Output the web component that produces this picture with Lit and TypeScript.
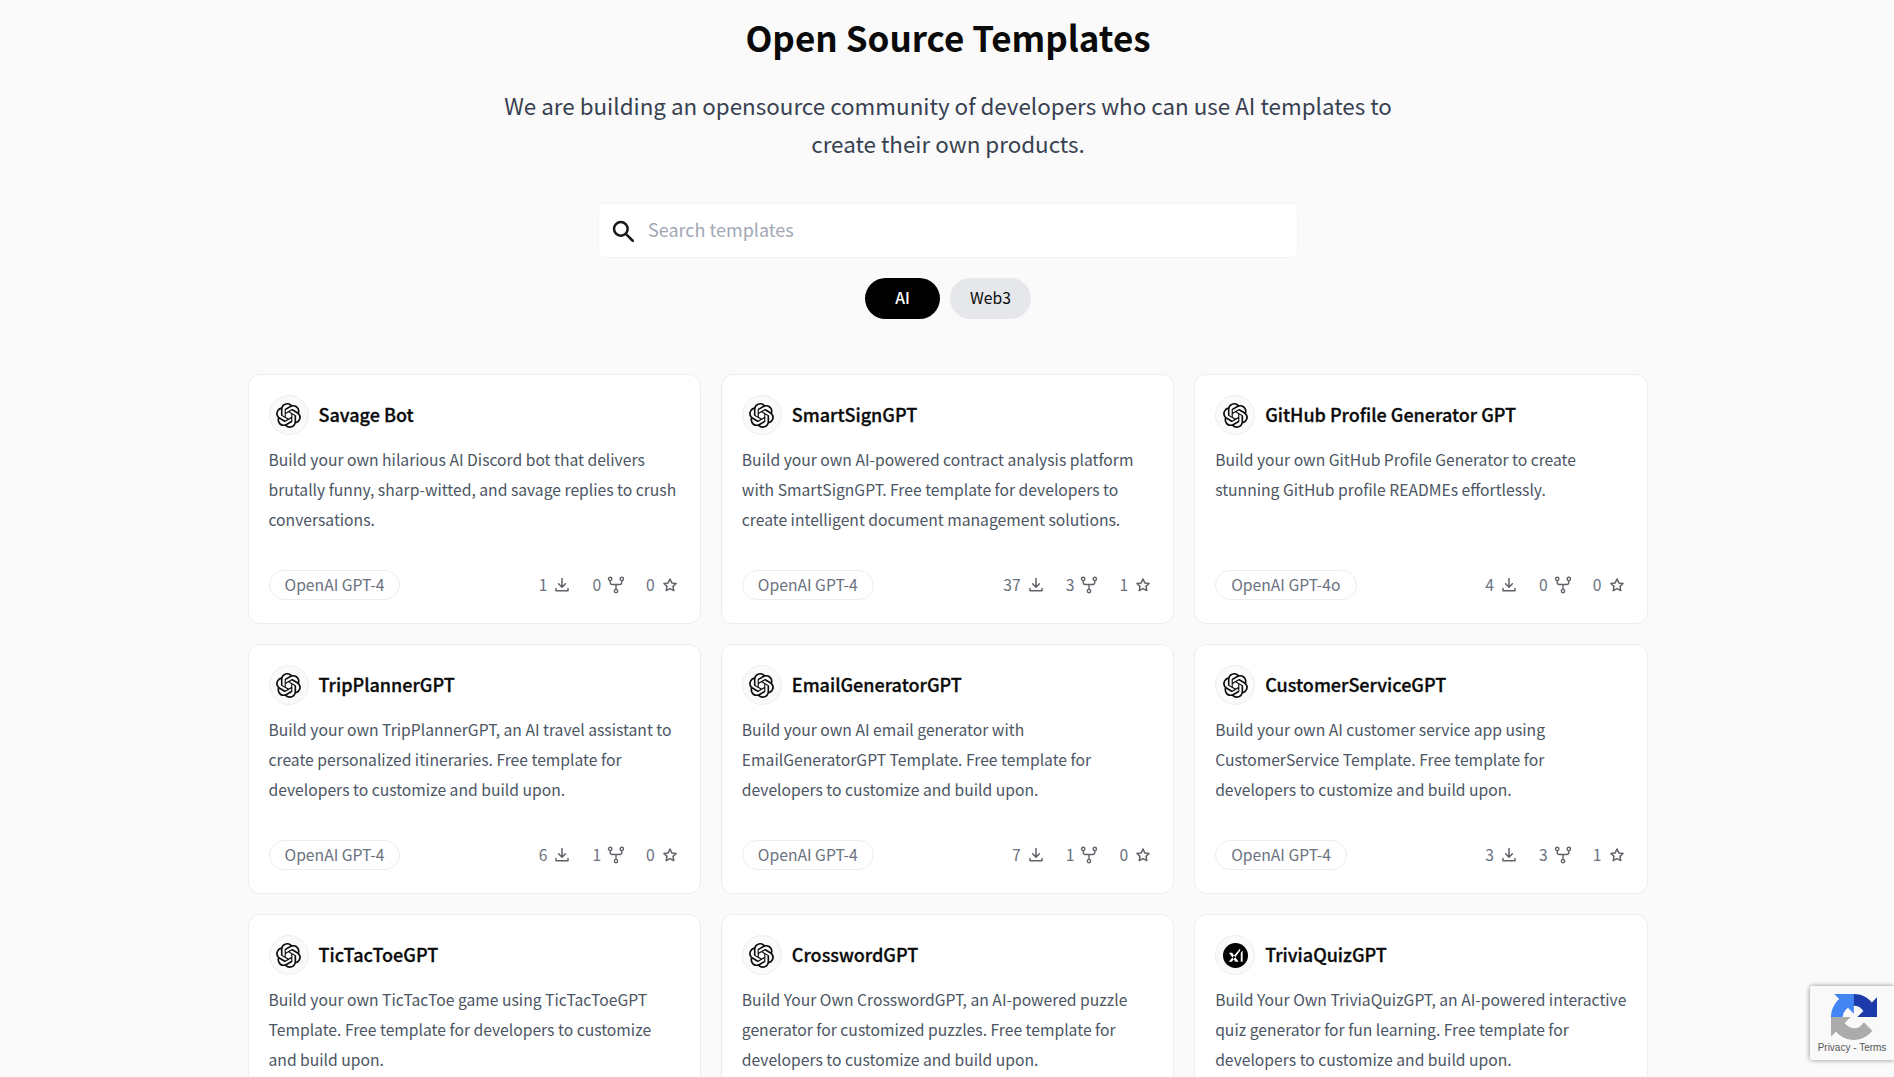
import { LitElement, html, css, svg } from "lit";
import { customElement } from "lit/decorators.js";

const OPENAI = "M22.2819 9.8211a5.9847 5.9847 0 0 0-.5157-4.9108 6.0462 6.0462 0 0 0-6.5098-2.9A6.0651 6.0651 0 0 0 4.9807 4.1818a5.9847 5.9847 0 0 0-3.9977 2.9 6.0462 6.0462 0 0 0 .7427 7.0966 5.98 5.98 0 0 0 .511 4.9107 6.051 6.051 0 0 0 6.5146 2.9001A5.9847 5.9847 0 0 0 13.2599 24a6.0557 6.0557 0 0 0 5.7718-4.2058 5.9894 5.9894 0 0 0 3.9977-2.9001 6.0557 6.0557 0 0 0-.7475-7.0729zm-9.022 12.6081a4.4755 4.4755 0 0 1-2.8764-1.0408l.1419-.0804 4.7783-2.7582a.7948.7948 0 0 0 .3927-.6813v-6.7369l2.02 1.1686a.071.071 0 0 1 .038.052v5.5826a4.504 4.504 0 0 1-4.4945 4.4944zm-9.6607-4.1254a4.4708 4.4708 0 0 1-.5346-3.0137l.142.0852 4.783 2.7582a.7712.7712 0 0 0 .7806 0l5.8428-3.3685v2.3324a.0804.0804 0 0 1-.0332.0615L9.74 19.9502a4.4992 4.4992 0 0 1-6.1408-1.6464zM2.3408 7.8956a4.485 4.485 0 0 1 2.3655-1.9728V11.6a.7664.7664 0 0 0 .3879.6765l5.8144 3.3543-2.0201 1.1685a.0757.0757 0 0 1-.071 0l-4.8303-2.7865A4.504 4.504 0 0 1 2.3408 7.872zm16.5963 3.8558L13.1038 8.364 15.1192 7.2a.0757.0757 0 0 1 .071 0l4.8303 2.7913a4.4944 4.4944 0 0 1-.6765 8.1042v-5.6772a.79.79 0 0 0-.407-.667zm2.0107-3.0231l-.142-.0852-4.7735-2.7818a.7759.7759 0 0 0-.7854 0L9.409 9.2297V6.8974a.0662.0662 0 0 1 .0284-.0615l4.8303-2.7866a4.4992 4.4992 0 0 1 6.6802 4.66zM8.3065 12.863l-2.02-1.1638a.0804.0804 0 0 1-.038-.0567V6.0742a4.4992 4.4992 0 0 1 7.3757-3.4537l-.142.0805L8.704 5.459a.7948.7948 0 0 0-.3927.6813zm1.0976-2.3654l2.602-1.4998 2.6069 1.4998v2.9994l-2.5974 1.4997-2.6067-1.4997Z";

const logo = (kind: string) =>
  kind === "x"
    ? html`<svg class="xlogo" viewBox="0 0 26 26"><circle cx="13" cy="13" r="13" fill="#000"/><path d="M6 19.500h3.200L17.800 8V5.800zM6.200 10.200h3.300l6.700 9.300h-3.300zM18.500 10.200l1.900-2.500v11.800h-1.900z" fill="#fff"/></svg>`
    : html`<svg class="ologo" viewBox="0 0 24 24"><path d=${OPENAI} fill="#0d0d0d"/></svg>`;

const iDownload = svg`<path d="M9 2.500v8.500M5.600 7.800 9 11.200l3.400-3.400M3 12.500v2.200h12v-2.200" fill="none" stroke="currentColor" stroke-width="1.500" stroke-linecap="round" stroke-linejoin="round"/>`;
const iFork = svg`<g fill="none" stroke="currentColor" stroke-width="1.400"><circle cx="3.200" cy="2.900" r="1.700"/><circle cx="14.800" cy="2.900" r="1.700"/><circle cx="9" cy="15.100" r="1.700"/><path d="M3.200 4.600v1.700c0 1.200.9 2.200 2.200 2.200h7.200c1.300 0 2.200-1 2.200-2.200V4.600M9 8.500v4.900"/></g>`;
const iStar = svg`<path d="M9 3l1.850 3.900 4.250.55-3.120 2.950.82 4.200L9 12.550 5.200 14.600l.82-4.200L2.900 7.450l4.250-.55z" fill="none" stroke="currentColor" stroke-width="1.500" stroke-linejoin="round"/>`;

interface T { name: string; desc: string; tag?: string; d?: number; f?: number; s?: number; logo?: string }
const items: T[] = [
  { name: "Savage Bot", desc: "Build your own hilarious AI Discord bot that delivers brutally funny, sharp-witted, and savage replies to crush conversations.", tag: "OpenAI GPT-4", d: 1, f: 0, s: 0 },
  { name: "SmartSignGPT", desc: "Build your own AI-powered contract analysis platform with SmartSignGPT. Free template for developers to create intelligent document management solutions.", tag: "OpenAI GPT-4", d: 37, f: 3, s: 1 },
  { name: "GitHub Profile Generator GPT", desc: "Build your own GitHub Profile Generator to create stunning GitHub profile READMEs effortlessly.", tag: "OpenAI GPT-4o", d: 4, f: 0, s: 0 },
  { name: "TripPlannerGPT", desc: "Build your own TripPlannerGPT, an AI travel assistant to create personalized itineraries. Free template for developers to customize and build upon.", tag: "OpenAI GPT-4", d: 6, f: 1, s: 0 },
  { name: "EmailGeneratorGPT", desc: "Build your own AI email generator with EmailGeneratorGPT Template. Free template for developers to customize and build upon.", tag: "OpenAI GPT-4", d: 7, f: 1, s: 0 },
  { name: "CustomerServiceGPT", desc: "Build your own AI customer service app using CustomerService Template. Free template for developers to customize and build upon.", tag: "OpenAI GPT-4", d: 3, f: 3, s: 1 },
  { name: "TicTacToeGPT", desc: "Build your own TicTacToe game using TicTacToeGPT Template. Free template for developers to customize and build upon." },
  { name: "CrosswordGPT", desc: "Build Your Own CrosswordGPT, an AI-powered puzzle generator for customized puzzles. Free template for developers to customize and build upon." },
  { name: "TriviaQuizGPT", desc: "Build Your Own TriviaQuizGPT, an AI-powered interactive quiz generator for fun learning. Free template for developers to customize and build upon.", logo: "x" },
];

@customElement("app-root")
export class AppRoot extends LitElement {
  static styles = css`
    :host {
      display: block;
      height: 1077px;
      overflow: hidden;
      position: relative;
      background: #fafafa;
      font-family: "Noto Sans CJK SC", "Source Sans Pro", sans-serif;
      color: #374151;
    }
    .page { display: flex; flex-direction: column; align-items: center; padding-left: 2px; }
    h1 {
      margin: 15px 0 0;
      font-size: 35px;
      line-height: 44px;
      font-weight: 700;
      color: #0a0a0a;
    }
    .sub {
      margin: 27px 0 0;
      width: 900px;
      text-align: center;
      font-size: 22.4px;
      line-height: 38px;
      color: #374151;
    }
    .search {
      margin-top: 41px;
      width: 700px;
      height: 55px;
      box-sizing: border-box;
      background: #fff;
      border: 1px solid #f3f4f6;
      border-radius: 6px;
      display: flex;
      align-items: center;
      gap: 12px;
      padding-left: 11px;
    }
    .search svg { width: 26px; height: 26px; flex: none; }
    .search input {
      flex: 1;
      border: 0;
      outline: 0;
      background: transparent;
      font: inherit;
      font-size: 18px;
      line-height: 24px;
      color: #111;
      padding: 0 0 4px;
    }
    .search input::placeholder { color: #a3a8b4; opacity: 1; }
    .tabs { margin-top: 20px; display: flex; gap: 10px; }
    .tab {
      height: 41px;
      min-width: 75px;
      box-sizing: border-box;
      border-radius: 21px;
      display: flex;
      align-items: center;
      justify-content: center;
      padding: 0 20px 2px;
      font-size: 15.7px;
      background: #e5e7eb;
      color: #0a0a0a;
    }
    .tab.on { background: #000; color: #fff; font-weight: 500; }
    .grid {
      margin: 55px 1px 0 0;
      width: 1400px;
      display: grid;
      grid-template-columns: repeat(3, 1fr);
      gap: 20px;
    }
    .card {
      box-sizing: border-box;
      height: 250px;
      background: #fff;
      border: 1px solid #eceded;
      border-radius: 12px;
      padding: 20px 19px 23px 20px;
      display: flex;
      flex-direction: column;
    }
    .head { display: flex; align-items: center; gap: 10px; }
    .icon {
      width: 40px;
      height: 40px;
      box-sizing: border-box;
      border-radius: 50%;
      border: 1px solid #eeeeee;
      background: #fafafa;
      display: flex;
      align-items: center;
      justify-content: center;
      flex: none;
    }
    .ologo { width: 25px; height: 25px; }
    .xlogo { width: 25px; height: 25px; }
    .name {
      font-size: 18px;
      line-height: 38px;
      padding-bottom: 2px;
      font-weight: 500;
      -webkit-text-stroke: 0.3px #0a0a0a;
      color: #0a0a0a;
    }
    .desc {
      margin: 10px 0 0;
      font-size: 15.68px;
      line-height: 30px;
      color: #4b5563;
      height: 90px;
    }
    .foot { margin-top: auto; display: flex; align-items: center; justify-content: space-between; }
    .tag {
      height: 30px;
      box-sizing: border-box;
      border: 1px solid #eceded;
      border-radius: 15px;
      padding: 0 15px;
      display: flex;
      align-items: center;
      font-size: 15.7px;
      line-height: 20px;
      color: #6b7280;
    }
    .stats { display: flex; gap: 21px; align-items: center; font-size: 15.7px; line-height: 20px; color: #6b7280; margin-right: 2px; }
    .stat { display: flex; align-items: center; gap: 6px; }
    .stat svg { width: 18px; height: 18px; color: #5f6368; }
    .recaptcha {
      position: absolute;
      right: 0;
      top: 986px;
      width: 84px;
      height: 74px;
      background: #f9f9f9;
      border-radius: 2px 0 0 2px;
      box-shadow: 0 0 5px #8a8a8a;
      display: flex;
      flex-direction: column;
      align-items: center;
      font-family: "Liberation Sans", Arial, sans-serif;
      overflow: hidden;
    }
    .recaptcha svg { width: 46px; height: 46px; margin-top: 8px; margin-left: 4px; flex: none; }
    .recaptcha span { font-size: 10px; line-height: 12px; color: #555; white-space: nowrap; margin-top: 2px; }
  `;

  private card(t: T) {
    return html`<div class="card">
      <div class="head"><div class="icon">${logo(t.logo ?? "o")}</div><div class="name">${t.name}</div></div>
      <p class="desc">${t.desc}</p>
      ${t.tag
        ? html`<div class="foot">
            <div class="tag">${t.tag}</div>
            <div class="stats">
              <div class="stat">${t.d}<svg viewBox="0 0 18 18">${iDownload}</svg></div>
              <div class="stat">${t.f}<svg viewBox="0 0 18 18">${iFork}</svg></div>
              <div class="stat">${t.s}<svg viewBox="0 0 18 18">${iStar}</svg></div>
            </div>
          </div>`
        : ""}
    </div>`;
  }

  render() {
    return html`<div class="page">
        <h1>Open Source Templates</h1>
        <p class="sub">We are building an opensource community of developers who can use AI templates to<br />create their own products.</p>
        <div class="search">
          <svg viewBox="0 0 24 24"><circle cx="10" cy="10" r="6.300" fill="none" stroke="#171717" stroke-width="2.300"/><path d="M14.800 14.800 21 21" stroke="#171717" stroke-width="2.300" stroke-linecap="round"/></svg>
          <input placeholder="Search templates" />
        </div>
        <div class="tabs"><div class="tab on">AI</div><div class="tab">Web3</div></div>
        <div class="grid">${items.map((t) => this.card(t))}</div>
      </div>
      <div class="recaptcha">
        <svg viewBox="0 0 64 64">
          <path d="M64 31.955l-.033-1.37V4.687l-7.16 7.16C50.948 4.674 42.033.093 32.05.093c-10.4 0-19.622 4.96-25.458 12.64l11.736 11.86a15.55 15.55 0 0 1 4.754-5.333c2.05-1.6 4.952-2.906 8.968-2.906.485 0 .86.057 1.135.163 4.976.393 9.288 3.14 11.828 7.124l-8.307 8.307c10.522-.04 22.4-.066 27.295.005" fill="#1c3aa9"/>
          <path d="M31.862.094l-1.37.033H4.594l7.16 7.16C4.58 13.147 0 22.06 0 32.046c0 10.4 4.96 19.622 12.64 25.458l11.86-11.736a15.55 15.55 0 0 1-5.334-4.754c-1.6-2.05-2.906-4.952-2.906-8.968 0-.485.057-.86.163-1.135.393-4.976 3.14-9.288 7.124-11.828l8.307 8.307c-.04-10.522-.066-22.4.005-27.295" fill="#4285f4"/>
          <path d="M.001 32.045l.033 1.37v25.898l7.16-7.16c5.86 7.173 14.774 11.754 24.76 11.754 10.4 0 19.622-4.96 25.458-12.64l-11.736-11.86a15.55 15.55 0 0 1-4.754 5.334c-2.05 1.6-4.952 2.906-8.968 2.906-.485 0-.86-.057-1.135-.163-4.976-.393-9.288-3.14-11.828-7.124l8.307-8.307c-10.522.04-22.4.066-27.295-.005" fill="#ababab"/>
        </svg>
        <span>Privacy - Terms</span>
      </div>`;
  }
}
